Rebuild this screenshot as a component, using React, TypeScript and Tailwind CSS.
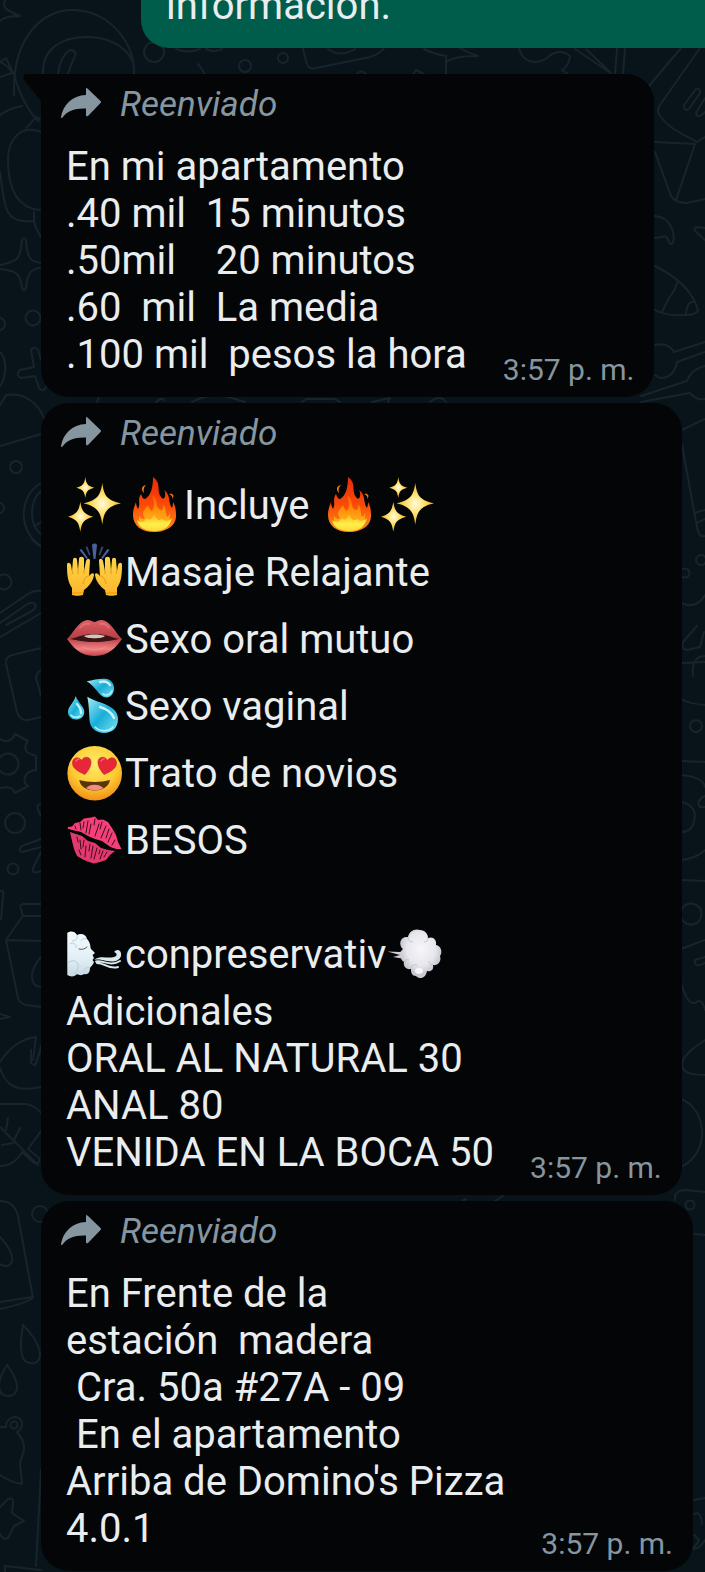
import type { ReactNode } from "react";

interface EmojiProps {
  label: string;
  children: ReactNode;
}

function Emoji({ label, children }: EmojiProps) {
  return (
    <svg role="img" aria-label={label} viewBox="0 0 59 56" className="h-14 w-[59px] shrink-0 overflow-visible">
      {children}
    </svg>
  );
}

function Sparkles() {
  return (
    <Emoji label="sparkles">
      <path fill="url(#gold)" d="M36.3 5C38 17 40 22 55 25.3C40 29 38 34 36.3 46.7C34.5 34 32 29 17.5 25.3C32 22 34.5 17 36.3 5Z" />
      <path fill="url(#gold)" d="M19.3 -1C20.3 6 21.5 8 28.3 9.7C21.5 11.5 20.3 13 19.3 20C18.3 13 17 11.5 10.3 9.7C17 8 18.3 6 19.3 -1Z" />
      <path fill="url(#gold)" d="M14.3 23.7C15.8 33 17.5 36 27.3 38.7C17.5 41.5 15.8 44 14.3 53.7C12.8 44 11 41.5 2 38.7C11 36 12.8 33 14.3 23.7Z" />
    </Emoji>
  );
}

function Fire() {
  return (
    <Emoji label="fire">
      <path fill="#f57c00" d="M21 7C16 8 16 12 19 15C18 11 19 9 21 7ZM44 16C48 15 50 18 47 21C48 19 47 17 44 16Z" />
      <path
        fill="url(#flame)"
        d="M28 -1C37 6 31 12 36 19C39 24 42 17 39 12C46 17 43 25 47 30C48 27 48 25 48 24C51 29 51 34 51 38C51 48 41 54 29 54C17 54 8 48 8 37C8 31 10 27 11 24C11 27 12 29 13 31C16 25 12 22 16 16C17 19 18 21 20 21C26 18 28 9 28 -1Z"
      />
      <path
        fill="url(#flameCore)"
        d="M27 17C34 22 30 27 34 31C37 34 39 30 38 26C42 31 40 36 42 39C44 38 44 37 45 35C46 45 40 53 29 53C19 53 13 47 14 38C16 41 18 42 20 40C15 34 21 31 23 27C24 30 25 32 27 33C30 29 29 23 27 17Z"
      />
      <path
        fill="url(#flameHeart)"
        d="M12 42C16 45 20 44 22 40C25 44 27 40 29 36C31 40 33 44 37 41C40 44 44 43 47 40C45 49 39 53 29 53C20 53 13 49 12 42Z"
      />
    </Emoji>
  );
}

function Hand() {
  return (
    <>
      <path
        fill="url(#skin)"
        d="M6 50L6 43C2 37 1 31 1 20C1 17 4 17 5 20L6 26L7 15C7 12 11 12 11 15L12 25L13 14C13 11 18 11 18 14L18 26L20 16C21 13 24 13 24 16L23 31C25 28 28 27 28 30C27 37 22 42 18 45L17 50C14 51 9 51 6 50Z"
      />
      <path fill="none" stroke="#e59a12" strokeWidth="1" d="M6 25L7 29M12 24L12 29M18 25L18 29M17 39C18 34 20 31 23 31M6 48H17" />
    </>
  );
}

function RaisedHands() {
  return (
    <Emoji label="raising hands">
      <Hand />
      <g transform="translate(57 0) scale(-1 1)">
        <Hand />
      </g>
      <path fill="#4a619f" d="M26 0C27 -2 30 -2 31 0L29.5 14H27.5ZM13.5 5L15.5 4L22 13L20.5 14ZM43.5 5L41.5 4L35 13L36.5 14Z" />
      <path fill="#36456f" d="M19.5 2L21.5 1.5L24.5 10L23 10.5ZM37.5 2L35.5 1.5L32.5 10L34 10.5Z" />
    </Emoji>
  );
}

function Mouth() {
  return (
    <Emoji label="mouth">
      <path fill="url(#lip)" d="M1 27C7 22 12 9 21 8C25 8 27 10 28.5 10C30 10 32 8 36 8C45 9 50 22 56 27C50 35 43 44 28.5 44C14 44 7 35 1 27Z" />
      <path fill="#3a1518" d="M4 27C12 25 18 22 28.5 22C39 22 45 25 53 27C46 28 41 30 28.5 30C16 30 12 28 4 27Z" />
      <path fill="#cfc5b8" d="M18 24C24 22 33 22 39 24C37 27 20 27 18 24Z" />
      <path fill="none" stroke="#f79292" strokeWidth="2" strokeLinecap="round" opacity="0.4" d="M14 16C17 12 20 11 23 12M34 12C38 11 41 13 43 16M17 35C24 39 33 39 40 35" />
    </Emoji>
  );
}

function Droplets() {
  return (
    <Emoji label="sweat droplets">
      <path fill="url(#water)" d="M20.7 2.2C28 1 35 -1 41 0C50 2 50 15 43 18C34 21 31 8 20.7 2.2Z" />
      <path fill="url(#water)" d="M9.7 17C12 24 18.3 27 18.3 33C18.3 38 14 40.5 10 40.5C5 40.5 2 37 2 33C2 27 8 24 9.7 17Z" />
      <path fill="url(#water)" d="M21.3 17.8C30 24 52 25 52 40C52 49 46 54 38 54C30 54 24 49 23.5 41C23 33 23 26 21.3 17.8Z" />
      <path fill="none" stroke="#e0fbff" strokeWidth="2.4" strokeLinecap="round" opacity="0.85" d="M34 3C38 2 42 3 44 6M34 28C41 30 46 34 48 39M11 25C14 28 15 31 15 34" />
      <path fill="none" stroke="#b2f3fb" strokeWidth="1.6" strokeLinecap="round" d="M29 48C34 53 43 53 47 48M5 36C7 39 12 39 14 37M37 15C40 17 44 16 46 12" />
    </Emoji>
  );
}

function HeartEyes() {
  return (
    <Emoji label="heart eyes">
      <circle cx="28.7" cy="27.3" r="27.3" fill="url(#face)" />
      <path fill="#e8263a" stroke="#c31c2e" strokeWidth="0.6" d="M19 28.5C11 25 6.500 22 6.500 17C6.500 11.500 13 10 15.500 14.500C18 9.500 25 10.500 25 16C25 21 22 25 19 28.5Z" />
      <path fill="#e8263a" stroke="#c31c2e" strokeWidth="0.6" d="M38 28.5C35 25 32 21 32 16C32 10.500 39 9.500 41.500 14.500C44 10 50.500 11.500 50.500 17C50.500 22 46 25 38 28.5Z" />
      <path fill="none" stroke="#ff7a7a" strokeWidth="1.6" strokeLinecap="round" opacity="0.7" d="M10 15C11 13 12 13 13 13M35 15C36 13 37 13 38 13" />
      <path fill="#5c3409" d="M13.300 34C22 36.500 35 36.500 44 34C43 40 37 44.500 28.700 44.500C20 44.500 14 40 13.300 34Z" />
      <path fill="#f28c8c" d="M20 42C24 37.500 33 37.500 37.500 42C33 45 25 45 20 42Z" />
    </Emoji>
  );
}

function KissMark() {
  return (
    <Emoji label="kiss mark">
      <path
        fill="#f4407a"
        d="M1.700 14L6 13.500L9 10L14 9L18 5.500L25 4.500L29 3.500L32 7L37 6.500L42 9L46 15L50 22L52 29L55.500 36L50 37L43 33L36 28L29 26L22 23L15 19L8 17.500L2 16Z"
      />
      <path
        fill="#e23a6e"
        d="M4 19L10 21L16 23L22 28L29 30L35 35L42 37L49 38L44 42L40 47L34 49L28 50.500L23 49L17 46.500L11 43L8 36L6 28Z"
      />
      <path
        fill="none"
        stroke="#3d0a1b"
        strokeWidth="1"
        strokeLinecap="round"
        d="M9 13L10 16M14 10L15 17M18 9L17 15M22 8L20 20M25 11L23 21M29 6L28 12M33 11L29 23M36 9L34 16M40 13L35 25M43 16L40 25M46 20L42 29M49 27L46 32M11 24L12 29M14 27L15 36M18 27L17 34M20 33L19 44M24 31L23 38M27 33L25 45M31 35L28 46M34 37L33 41M37 38L34 46M41 39L38 44M13 37L15 42"
      />
      <path fill="none" stroke="#040506" strokeWidth="1.400" d="M2 17C12 19 20 23 27 28C35 31 42 36 54 37" />
    </Emoji>
  );
}

function WindFace() {
  return (
    <Emoji label="wind face">
      <path
        fill="url(#cloud)"
        d="M1.300 6C4 3.500 9 4 11 8C15 6 20 7 21 12C25 16 24 20 25 22L29 26L26.500 28L28 31L26.500 33L28 35C27 38 25 39 24 41C24 45 22 48 18 47C15 49 13 48 11 47C9 50 4 50 1.300 48Z"
      />
      <path fill="none" stroke="#b7ccd9" strokeWidth="1" d="M11 8C12 12 9 14 6 14M4 17C7 15 11 17 10 21M20 12C18 11 16 12 15 14M2 36C7 31 14 35 12 41C12 44 10 46 8 46M24 41C21 40 19 41 18 43" />
      <path fill="none" stroke="#4c5b66" strokeWidth="1" strokeLinecap="round" d="M13 22C16 23 19 22 21 20" />
      <path
        fill="#dbe8ee"
        d="M28 33C35 28 41 32 48 30C52 29 51 26 48 25C51 21 56 23 55 29C53 35 46 35 41 34C36 33 32 32 28 33Z"
      />
      <path
        fill="none"
        stroke="#dbe8ee"
        strokeWidth="2"
        strokeLinecap="round"
        d="M30 34.500C38 33 44 40 54 34M31 36C39 36 43 43 52 40"
      />
    </Emoji>
  );
}

function Dash() {
  return (
    <Emoji label="dashing away">
      <path fill="#cfd0d6" d="M1.300 24.500L14 25L19 22L19 32L7 30L14 28Z" />
      <path
        fill="url(#puff)"
        d="M22 10C23 4 29 1 34 3C39 3 42 7 42 11C47 9 51 13 50 18C55 19 57 25 54 29C56 35 51 39 47 38C48 43 45 45 41 44C40 51 34 53 30 49C26 49 25 46 25 42C20 43 17 39 18 35C13 32 14 24 17 22C12 18 14 9 22 10Z"
      />
      <path fill="none" stroke="#b4b4bf" strokeWidth="1" opacity="0.7" d="M22 10C22 13 24 15 27 15M42 11C42 14 40 15 38 15M47 38C44 38 43 36 43 34M25 42C25 39 27 37 31 38M18 35C19 33 21 32 23 33" />
      <ellipse cx="33" cy="44" rx="4" ry="3" fill="#ffffff" opacity="0.8" />
    </Emoji>
  );
}

function Wallpaper() {
  return (
    <svg aria-hidden="true" viewBox="0 0 705 1572" className="absolute top-0 left-0 w-full">
      <defs>
        <radialGradient id="gold">
          <stop offset="0" stopColor="#fffbe6" />
          <stop offset="0.35" stopColor="#ffe88a" />
          <stop offset="1" stopColor="#f2b90a" />
        </radialGradient>
        <linearGradient id="flame" x1="0" y1="0" x2="0" y2="1">
          <stop offset="0" stopColor="#e8290b" />
          <stop offset="0.5" stopColor="#fb4a07" />
          <stop offset="1" stopColor="#f9901b" />
        </linearGradient>
        <linearGradient id="flameCore" x1="0" y1="0" x2="0" y2="1">
          <stop offset="0" stopColor="#ff5a05" />
          <stop offset="0.4" stopColor="#ff8f0a" />
          <stop offset="1" stopColor="#ffc727" />
        </linearGradient>
        <linearGradient id="flameHeart" x1="0" y1="0" x2="0" y2="1">
          <stop offset="0" stopColor="#ffb31a" />
          <stop offset="0.6" stopColor="#ffef4a" />
          <stop offset="1" stopColor="#ffd83a" />
        </linearGradient>
        <linearGradient id="skin" x1="0" y1="0" x2="0" y2="1">
          <stop offset="0" stopColor="#ffd54a" />
          <stop offset="1" stopColor="#fcb52a" />
        </linearGradient>
        <linearGradient id="lip" x1="0" y1="0" x2="0" y2="1">
          <stop offset="0" stopColor="#dc5f66" />
          <stop offset="0.5" stopColor="#b93d44" />
          <stop offset="0.8" stopColor="#ee8080" />
          <stop offset="1" stopColor="#c0434a" />
        </linearGradient>
        <linearGradient id="water" x1="0" y1="0" x2="1" y2="1">
          <stop offset="0" stopColor="#a5eef7" />
          <stop offset="0.5" stopColor="#18add8" />
          <stop offset="1" stopColor="#7fe3f2" />
        </linearGradient>
        <radialGradient id="face" cx="0.5" cy="0.32" r="0.7">
          <stop offset="0" stopColor="#ffec6a" />
          <stop offset="0.6" stopColor="#fdcb33" />
          <stop offset="1" stopColor="#f08a16" />
        </radialGradient>
        <linearGradient id="cloud" x1="0" y1="0" x2="0" y2="1">
          <stop offset="0" stopColor="#f4fafd" />
          <stop offset="0.6" stopColor="#e3eff5" />
          <stop offset="1" stopColor="#c6d8e2" />
        </linearGradient>
        <radialGradient id="puff" cx="0.5" cy="0.4">
          <stop offset="0" stopColor="#f7f7fa" />
          <stop offset="0.7" stopColor="#e6e6ec" />
          <stop offset="1" stopColor="#c9c9d2" />
        </radialGradient>
      </defs>

      <g fill="none" stroke="#17242a" strokeWidth="2" strokeLinecap="round" strokeLinejoin="round">
        {/* top strip */}
        <path d="M5 0C1 8 8 11 20 16C14 17 7 15 0 21M14 95C12 35 45 8 75 10C112 12 135 45 134 74M43 74C42 50 60 36 90 37C112 38 126 48 132 60M58 74C60 60 66 50 72 50C80 53 72 58 68 74" />
        <circle cx="154" cy="52" r="10" />
        <circle cx="245" cy="66" r="6" />
        <circle cx="283" cy="58" r="5" />
        <path d="M176 49Q188 54 200 49M206 49Q214 53 222 49M303 49L307 64Q309 70 316 68L370 57Q380 54 384 48M328 49Q340 58 355 49M198 64L205 74M357 74Q361 69 366 74M413 74L416 70L424 74M424 49Q434 54 446 56L446 74M446 62Q454 56 478 56Q468 53 460 48" />
        <path d="M519 49C525 68 545 62 549 56Q560 48 570 56Q569 66 562 70L568 74M575 49L612 74M586 49L610 72M617 49L615 74M625 49L623 74" />

        {/* left margin, upper part */}
        <path d="M0 62L6 58L13 73Q6 64 0 62M0 77L12 73M0 115Q10 108 22 106M14 74Q22 104 38 121M26 128C34 122 36 112 40 120M41 132C20 124 8 140 8 160C8 190 18 208 40 210M0 172C4 200 4 216 18 220Q26 222 34 221V212M34 221Q35 228 41 237" />
        <path d="M0 265C18 261 20 260 22 240Q24 236 26 240C27 260 32 262 41 263M0 269C18 271 20 274 22 288Q24 292 26 288C27 273 32 268 41 268" />
        <circle cx="33" cy="318" r="7.500" />
        <circle cx="-1" cy="324" r="6" />
        <path d="M41 360L38 350Q34 345 31 350L34 367L20 370Q15 375 21 378L35 376L39 388Q43 393 46 387M0 352C8 360 6 378 0 386M0 405L6 395C24 392 38 403 44 418M0 446L41 434" />
        <circle cx="16" cy="467" r="6" />
        <circle cx="-1" cy="508" r="5" />
        <path d="M41 483C18 496 18 532 41 546M41 491C29 501 29 526 41 534M35 526L41 522M32 540L41 547" />
        <circle cx="4" cy="582" r="7.500" />

        {/* left margin, middle part */}
        <path d="M0 613L28 594Q34 590 41 591M0 623L26 605Q31 601 35 604Q37 607 32 611L6 625M0 637Q3 636 7 633L41 613M41 648L12 655Q5 657 6 664L17 712Q20 721 28 720L41 717M41 670Q34 675 37 681L41 696" />
        <circle cx="8" cy="764" r="10.500" />
        <path d="M0 739Q10 745 15 734L28 741Q23 747 27 752Q30 754 36 756V770Q27 771 25 777Q23 783 28 786L15 793Q12 785 0 788" />
        <circle cx="15" cy="823" r="10" />
        <circle cx="13" cy="869" r="5.500" />
        <path d="M41 804Q36 804 38 810L41 816M41 839L22 846Q17 850 22 852L41 847M41 852L33 868Q32 874 38 872L41 871M0 891Q4 889 3 896L1 919M41 904H23Q19 905 21 909L23 916H41M22 917L6 940L18 998Q20 1004 26 1005L41 1007M6 940L41 941M41 957C30 969 28 986 41 987M0 1014L10 1017L0 1019M0 1062Q14 1040 36 1037L33 1060M41 1046L36 1064" />

        {/* left margin, lower part */}
        <path d="M31 1050V1058Q30 1065 35 1065L41 1050M0 1068C6 1087 18 1092 41 1087M0 1104H26Q36 1106 41 1113M0 1127L25 1152L38 1165M8 1118L6 1130M20 1128L14 1140M2 1145L13 1143M0 1166Q14 1166 22 1152L34 1163Q41 1164 39 1158L28 1149L41 1131M0 1201Q14 1201 18 1216L33 1298Q24 1304 0 1309M33 1297L0 1302M0 1237Q14 1252 12 1262Q8 1269 0 1264" />
        <circle cx="40" cy="1214" r="8" />
        <path d="M23 1325C42 1344 44 1361 34 1363C20 1365 21 1350 21 1340ZM7 1365C20 1382 20 1395 9 1396C-4 1396 -4 1382 7 1365ZM0 1427H6V1424Q9 1417 15 1417C24 1418 24 1428 17 1432C31 1448 20 1456 20 1464L22 1484Q10 1482 0 1475" />
        <circle cx="14" cy="1425" r="3.500" />
        <path d="M0 1507L8 1499Q13 1497 13 1502L12 1513L24 1521L14 1526L8 1538Q4 1541 0 1534M41 1470L36 1566M5 1572V1566L41 1570" />

        {/* right margin */}
        <path d="M649 86L681 48M700 48L660 105Q656 111 660 116C670 130 684 134 697 142L705 137M655 142L695 144L676 200M655 152L671 196Q675 203 687 203L705 199M684 105L696 89Q701 88 700 93L689 109Q684 112 684 105M705 98L696 113Q697 120 705 112" />
        <path d="M655 216C674 218 676 239 672 244C667 246 670 233 662 237L655 238M705 240L695 231Q693 227 698 227L705 228M655 266Q690 283 698 310Q697 315 685 315Q665 316 655 310M678 281L674 291L669 298L662 312M686 313Q687 302 693 302M655 345Q668 342 674 352L705 342M705 352L677 362Q674 378 660 378L655 375M641 396L687 381Q691 369 705 366M641 402L690 393Q697 401 705 399M682 430L705 419M682 445L697 527Q699 538 705 536M694 513L705 510M697 523L705 519" />
        <circle cx="701" cy="560" r="5" />
        <circle cx="685" cy="573" r="4.500" />
        <path d="M681 603Q696 610 705 595M697 626L683 642M683 642Q681 649 687 650L700 647L704 632M681 663L705 662M705 656Q691 656 693 676M681 699Q690 704 705 705M681 761L705 762M681 775Q703 777 705 787M681 802Q700 806 693 825Q690 832 681 832M705 796Q695 801 700 807H705M681 860Q697 858 705 850M681 880L705 881" />
        <circle cx="696" cy="726" r="6" />
        <circle cx="691" cy="914" r="10.500" />
        <path d="M681 949L705 940M705 957L695 960Q694 966 700 965L705 963M681 982Q687 1005 695 1003Q702 997 705 1010M705 1040Q678 1057 683 1068Q685 1075 705 1075M681 1099C706 1108 712 1152 681 1167M675 1200Q674 1190 686 1190L705 1192M694 1234L705 1235M694 1500L705 1498M694 1514Q701 1510 702 1524M694 1535L699 1540Q695 1549 688 1549M705 1540Q698 1552 687 1548" />
        <circle cx="690" cy="1205" r="4.500" />

        {/* slivers between the bubbles */}
        <path d="M97 402L99 397M156 402Q161 397 164 400M192 402Q210 392 232 398L245 402M302 402L306 399H335L340 402M372 402L390 398L388 402M430 402Q440 394 446 402M495 1201L503 1196M462 1201L466 1199" />
      </g>
    </svg>
  );
}

interface BubbleProps {
  tail?: boolean;
  time: string;
  children: ReactNode;
}

function ForwardedBubble({ tail, time, children }: BubbleProps) {
  return (
    <article
      className={`relative w-fit bg-[#040506] pt-[11px] pr-5 pb-2.5 pl-[25px] ${
        tail ? "rounded-[28px] rounded-tl-none" : "rounded-[28px]"
      }`}
    >
      {tail && (
        <svg aria-hidden="true" viewBox="0 0 19 28" className="absolute top-0 -left-[18px] h-7 w-[19px]">
          <path fill="#040506" d="M3 0H19V28L1 6Q-1 1 3 0Z" />
        </svg>
      )}
      <header className="mb-[18px] -ml-[5px] flex h-10 items-center gap-[19px] text-[35px] leading-10 text-[#8696a0] italic">
        <svg aria-hidden="true" viewBox="0 0 40 30" className="mb-1 h-[30px] w-10">
          <path fill="currentColor" d="M25 1Q25 -1 27 1L39.500 13Q40.500 14 39.500 15L27 28Q25 29 25 27V20.500C14 20 6 23 1.500 29.500Q0 31 0 29C2 17 11 7.500 25 7Z" />
        </svg>
        Reenviado
      </header>
      <div className="flex items-end gap-9">
        <div className="pb-[9px] text-[40px] leading-[47px] whitespace-pre text-[#e9edef]">{children}</div>
        <time className="ml-auto text-[30px] leading-[35px] whitespace-nowrap text-[#8696a0]">{time}</time>
      </div>
    </article>
  );
}

function EmojiRow({ children }: { children: ReactNode }) {
  return <div className="flex h-[67px] items-center">{children}</div>;
}

export default function App() {
  return (
    <main className="relative min-h-screen overflow-hidden bg-[#08141a] font-['Roboto',sans-serif]">
      <Wallpaper />
      <div className="relative">
        <article className="-mt-[18px] ml-[141px] rounded-bl-[28px] bg-[#005d4b] pb-[19px] pl-[25px] text-[40px] leading-[47px] text-[#e9edef]">
          información.
        </article>

        <section className="mt-[26px] flex flex-col gap-1.5 pl-[41px]">
          <ForwardedBubble tail time="3:57 p. m.">
            <p>En mi apartamento</p>
            <p>{".40 mil  15 minutos"}</p>
            <p>{".50mil    20 minutos"}</p>
            <p>{".60  mil  La media"}</p>
            <p>{".100 mil  pesos la hora"}</p>
          </ForwardedBubble>

          <ForwardedBubble time="3:57 p. m.">
            <EmojiRow>
              <Sparkles />
              <Fire />
              <span>{"Incluye "}</span>
              <Fire />
              <Sparkles />
            </EmojiRow>
            <EmojiRow>
              <RaisedHands />
              Masaje Relajante
            </EmojiRow>
            <EmojiRow>
              <Mouth />
              Sexo oral mutuo
            </EmojiRow>
            <EmojiRow>
              <Droplets />
              Sexo vaginal
            </EmojiRow>
            <EmojiRow>
              <HeartEyes />
              Trato de novios
            </EmojiRow>
            <EmojiRow>
              <KissMark />
              BESOS
            </EmojiRow>
            <br />
            <EmojiRow>
              <WindFace />
              conpreservativ
              <Dash />
            </EmojiRow>
            <p>Adicionales</p>
            <p>ORAL AL NATURAL 30</p>
            <p>ANAL 80</p>
            <p>VENIDA EN LA BOCA 50</p>
          </ForwardedBubble>

          <ForwardedBubble time="3:57 p. m.">
            <p>En Frente de la</p>
            <p>{"estación  madera"}</p>
            <p>{" Cra. 50a #27A - 09"}</p>
            <p>{" En el apartamento"}</p>
            <p>Arriba de Domino's Pizza</p>
            <p>4.0.1</p>
          </ForwardedBubble>
        </section>
      </div>
    </main>
  );
}
